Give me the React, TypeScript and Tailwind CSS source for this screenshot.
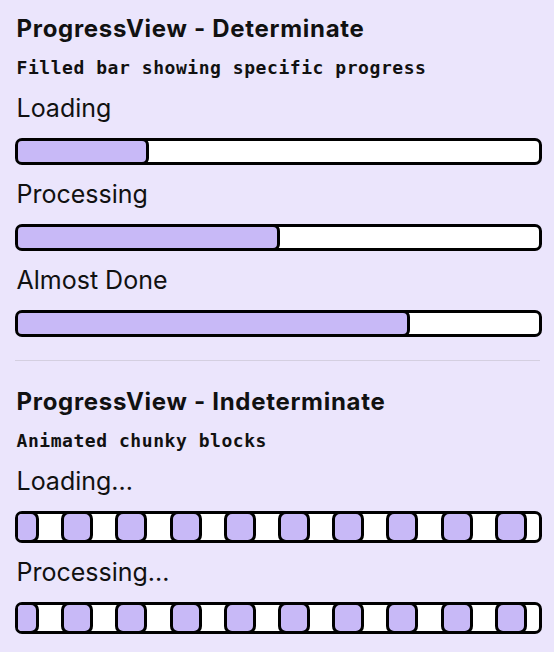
const PAGE_FONT = { fontFamily: "Inter, 'Noto Sans', sans-serif" };

function Header({ title, subtitle }: { title: string; subtitle: string }) {
  return (
    <>
      <h2 className="ml-[1.5px] text-[24px] leading-[28px] font-bold tracking-[0.7px] text-[#111]">{title}</h2>
      <p
        className="mt-[14px] ml-[1.5px] text-[18px] leading-[22px] font-bold tracking-[0.55px] text-[#111]"
        style={{ fontFamily: "'DejaVu Sans Mono', 'Liberation Mono', monospace" }}
      >
        {subtitle}
      </p>
    </>
  );
}

function Label({ text }: { text: string }) {
  return <div className="mt-[14px] ml-[1.5px] text-[25px] leading-[30px] text-[#111]">{text}</div>;
}

// fill overlaps the track stroke; the track clips it at its inner edge
function FilledBar({ value }: { value: number }) {
  return (
    <div className="mt-[15px] h-[27px] w-full rounded-[7px] border-[3px] border-black bg-white overflow-hidden">
      <div
        className="-m-[3px] h-[calc(100%+6px)] rounded-[7px] border-[3px] border-black bg-[#c8b9f7]"
        style={{ width: `calc(${value}% + 4px)` }}
      />
    </div>
  );
}

function ChunkyBar() {
  const blocks = Array.from({ length: 10 });
  return (
    <div className="mt-[15px] h-[32px] w-full rounded-[7px] border-[3px] border-black bg-white overflow-hidden">
      <div className="flex -my-[3px] h-[calc(100%+6px)] gap-[22.2px] ml-[-11px]">
        {blocks.map((_, i) => (
          <div
            key={i}
            className="h-full w-[32px] shrink-0 rounded-[8px] border-[3px] border-black bg-[#c8b9f7]"
          />
        ))}
      </div>
    </div>
  );
}

export default function App() {
  return (
    <div className="w-[554px] h-[652px] bg-[#ebe5fc] px-[15px] pt-[15px] overflow-hidden" style={PAGE_FONT}>
      <div className="w-[527px] flex flex-col">
        <Header title="ProgressView - Determinate" subtitle="Filled bar showing specific progress" />
        <Label text="Loading" />
        <FilledBar value={25} />
        <Label text="Processing" />
        <FilledBar value={50} />
        <Label text="Almost Done" />
        <FilledBar value={75} />

        <div className="mt-[23px] h-px w-[525px] bg-[#d4cfe0]" />

        <div className="mt-[27px]">
          <Header title="ProgressView - Indeterminate" subtitle="Animated chunky blocks" />
        </div>
        <Label text="Loading..." />
        <ChunkyBar />
        <Label text="Processing..." />
        <ChunkyBar />
      </div>
    </div>
  );
}
